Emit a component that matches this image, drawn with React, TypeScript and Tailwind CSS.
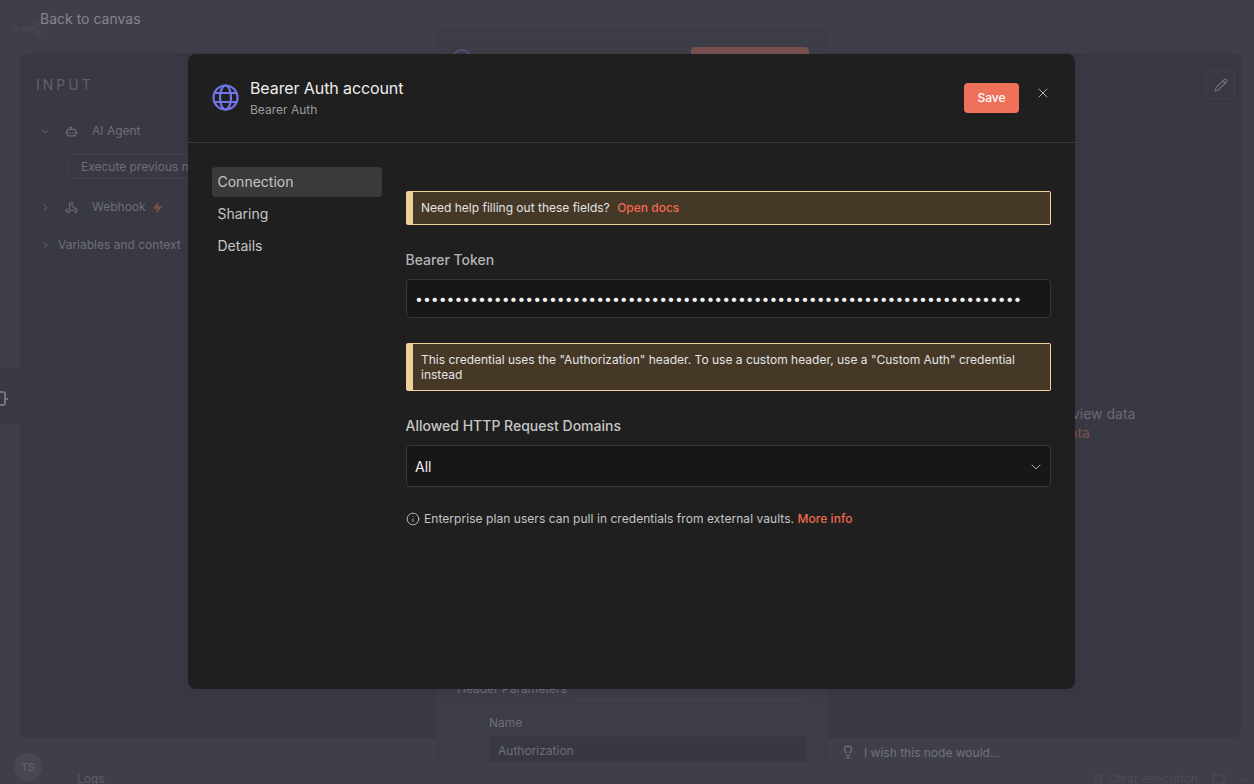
import { Bot, ChevronDown, ChevronRight, Info, Lightbulb, Pencil, Trash2, X, Zap, ChevronUp, MessageSquare, Webhook } from 'lucide-react';

const font = { fontFamily: 'Inter, "Noto Sans", sans-serif' };

function Callout({ children }: { children: React.ReactNode }) {
  return (
    <div className="border border-l-[7px] border-[#f0cf9b] rounded-[2px] bg-[#453827] pl-[8px] pr-2 py-2 text-xs leading-[15px] text-[#e4e4e4]">
      {children}
    </div>
  );
}

function GlobeIcon() {
  return (
    <svg width="27" height="27" viewBox="0 0 27 27" fill="none" stroke="#7275ea" strokeWidth="2.2">
      <circle cx="13.5" cy="13.5" r="12" />
      <ellipse cx="13.5" cy="13.5" rx="5.5" ry="12" />
      <path d="M2.6 9h21.8M2.6 18h21.8" />
    </svg>
  );
}

function Background() {
  return (
    <>
      <div className="h-[53px] pl-10 pt-[10px] text-sm leading-[18px] text-[#85858e]">Back to canvas</div>
      <svg className="absolute left-[11px] top-[20px]" width="30" height="16" viewBox="0 0 30 16" fill="none" stroke="#4d4650" strokeWidth="1.2">
        <circle cx="4" cy="9" r="2" />
        <circle cx="13" cy="9" r="2" />
        <circle cx="21" cy="9" r="2" />
        <circle cx="27" cy="4" r="2" />
        <circle cx="27" cy="13" r="2" />
        <path d="M6 9h5M15 9h4M23 9l2-4M23 9l2 3" />
      </svg>
      <div className="ml-5 mr-[13px] h-[685px] rounded-lg bg-[#393943] flex">
        <div className="w-[416px] pl-4 pt-[24px] text-xs text-[#6e6e78]">
          <div className="text-sm leading-4 tracking-[3px] text-[#61616b] mb-[30px]">INPUT</div>
          <div className="flex items-center h-4">
            <ChevronDown size={11} className="ml-[4px] mr-[14px]" />
            <Bot size={13} className="mr-[14px]" />
            <span>AI Agent</span>
          </div>
          <div className="ml-[32px] mt-[15px] h-[25px] w-[200px] pl-[12px] rounded border border-[#44444e] leading-[23px]">Execute previous nodes</div>
          <div className="flex items-center h-4 mt-[20px]">
            <ChevronRight size={11} className="ml-[4px] mr-[14px]" />
            <Webhook size={13} className="mr-[14px]" />
            <span>Webhook</span>
            <Zap size={11} className="ml-[6px] text-[#7a4f48] fill-[#7a4f48]" />
          </div>
          <div className="flex items-center h-4 mt-[22px]">
            <ChevronRight size={11} className="ml-[4px] mr-[7px]" />
            <span>Variables and context</span>
          </div>
        </div>
        <div className="flex-1" />
        <div className="w-[413px] relative">
          <div className="flex justify-end pt-[17px] pr-[6px]">
            <div className="w-[29px] h-[29px] rounded border border-[#41414b] flex items-center justify-center text-[#6e6e78]">
              <Pencil size={14} />
            </div>
          </div>
          <div className="absolute left-0 right-0 top-[351px] text-center text-sm leading-[19px] text-[#6a6a74]">
            <div>Execute this node to view data</div>
            <div>or set <span className="text-[#7c4f50]">mock data</span></div>
          </div>
        </div>
      </div>
      <div className="absolute left-[14px] top-[753px] w-[28px] h-[28px] rounded-full bg-[#4a4753] flex items-center justify-center text-[11px] text-[#65656f]">TS</div>
      <div className="absolute left-[77px] top-[771px] text-xs text-[#5d5d67]">Logs</div>
      <div className="absolute left-[0px] top-[368px] w-5 h-[56px] pt-[5px] bg-[#393943] flex items-center text-[#74747e]">
        <div className="w-[6px] h-[15px] rounded-r-[3px] border-2 border-l-0 border-[#74747e] shrink-0" />
        <div className="w-[2px] h-[2px] bg-[#74747e] shrink-0" />
      </div>
      <div className="absolute left-[436px] top-[28px] w-[392px] h-[735px] rounded-lg bg-[#3d3d47] text-xs">
        <div className="absolute left-[16px] top-[21px] w-[20px] h-[20px] rounded-full border-2 border-[#55557a]" />
        <div className="absolute left-[255px] top-[19px] w-[118px] h-[30px] rounded bg-[#7a5050]" />
        <div className="absolute left-[21px] top-[653px] text-[#6e6e78]">Header Parameters</div>
        <div className="absolute left-[141px] top-[671px] w-[228px] h-px bg-[#44444e]" />
        <div className="absolute left-[53px] top-[687px] text-[#6e6e78]">Name</div>
        <div className="absolute left-[53px] top-[709px] w-[316px] h-[25px] bg-[#383842] pl-[9px] leading-[27px] text-[#6e6e78]">Authorization</div>
      </div>
      <div className="absolute left-[841px] top-[745px] flex items-center text-xs text-[#72727c]">
        <Lightbulb size={14} className="mr-[9px] -mt-[2px]" />
        <span>I wish this node would...</span>
      </div>
      <div className="absolute right-[3px] top-[771px] flex items-center text-xs text-[#4b4b56]">
        <Trash2 size={12} className="mr-[4px]" />
        <span className="tracking-[0.1px]">Clear execution</span>
        <MessageSquare size={13} className="ml-[14px]" />
        <ChevronUp size={13} className="ml-[13px]" />
      </div>
    </>
  );
}

function Modal() {
  return (
    <div className="absolute left-[188px] top-[54px] w-[887px] h-[635px] rounded-lg bg-[#1f1f1f] shadow-[0_0_12px_rgba(0,0,0,0.08)]">
      <div className="h-[89px] border-b border-[#3b3b3b] flex pl-6 pr-[24px]">
        <div className="pt-[30px] pr-[11px]"><GlobeIcon /></div>
        <div className="flex-1 pt-[24px]">
          <div className="text-base leading-5 tracking-[-0.1px] text-[#ededed]">Bearer Auth account</div>
          <div className="mt-[2px] text-xs leading-5 text-[#9c9c9c]">Bearer Auth</div>
        </div>
        <div className="pt-[29px] flex items-start">
          <button className="w-[55px] h-[30px] rounded bg-[#f0715a] text-xs font-medium text-white">Save</button>
          <X size={16} strokeWidth={1.5} className="ml-[16px] mt-[2px] text-[#b0b0b0]" />
        </div>
      </div>
      <div className="flex pl-6 pr-6">
        <div className="w-[170px] pt-6 text-sm text-[#c6c6c6]">
          <div className="h-[30px] mb-[2px] pl-[5.5px] leading-[30px] rounded bg-[#3a3a3a]">Connection</div>
          <div className="h-[30px] mb-[2px] pl-[5.5px] leading-[30px]">Sharing</div>
          <div className="h-[30px] pl-[5.5px] leading-[30px]">Details</div>
        </div>
        <div className="flex-1 ml-6 pt-12">
          <Callout>
            <div className="pb-[1px]">Need help filling out these fields? <span className="ml-[4px] font-medium text-[#f2694f]">Open docs</span></div>
          </Callout>
          <div className="mt-[26px] -ml-[0.5px] text-sm leading-[17px] font-medium text-[#b4b4b4]">Bearer Token</div>
          <div className="mt-[11px] h-[39px] rounded border border-[#383838] bg-[#171717]">
            <input
              type="password"
              readOnly
              value={'x'.repeat(77)}
              className="w-full h-full px-2 pb-[1px] bg-transparent text-sm text-[#f0f0f0] outline-none"
              style={font}
            />
          </div>
          <div className="mt-[25px]">
            <Callout>This credential uses the "Authorization" header. To use a custom header, use a "Custom Auth" credential instead</Callout>
          </div>
          <div className="mt-[26px] -ml-[0.5px] text-sm leading-[17px] font-medium text-[#c6c6c6]">Allowed HTTP Request Domains</div>
          <div className="mt-[11px] h-[42px] rounded border border-[#383838] bg-[#171717] flex items-center justify-between pl-[8px] pr-[6px] pt-[1px] text-sm text-[#ededed]">
            <span>All</span>
            <ChevronDown size={16} strokeWidth={1.5} className="text-[#a8a8a8]" />
          </div>
          <div className="mt-[24px] flex items-center text-xs leading-4 text-[#c6c6c6]">
            <Info size={14} strokeWidth={1.5} className="mr-[4px]" />
            <span className="tracking-[0.05px]">Enterprise plan users can pull in credentials from external vaults. <span className="font-medium text-[#f2694f]">More info</span></span>
          </div>
        </div>
      </div>
    </div>
  );
}

export default function App() {
  return (
    <div className="relative w-[1254px] h-[784px] overflow-hidden bg-[#3f3f4a]" style={font}>
      <Background />
      <Modal />
    </div>
  );
}
